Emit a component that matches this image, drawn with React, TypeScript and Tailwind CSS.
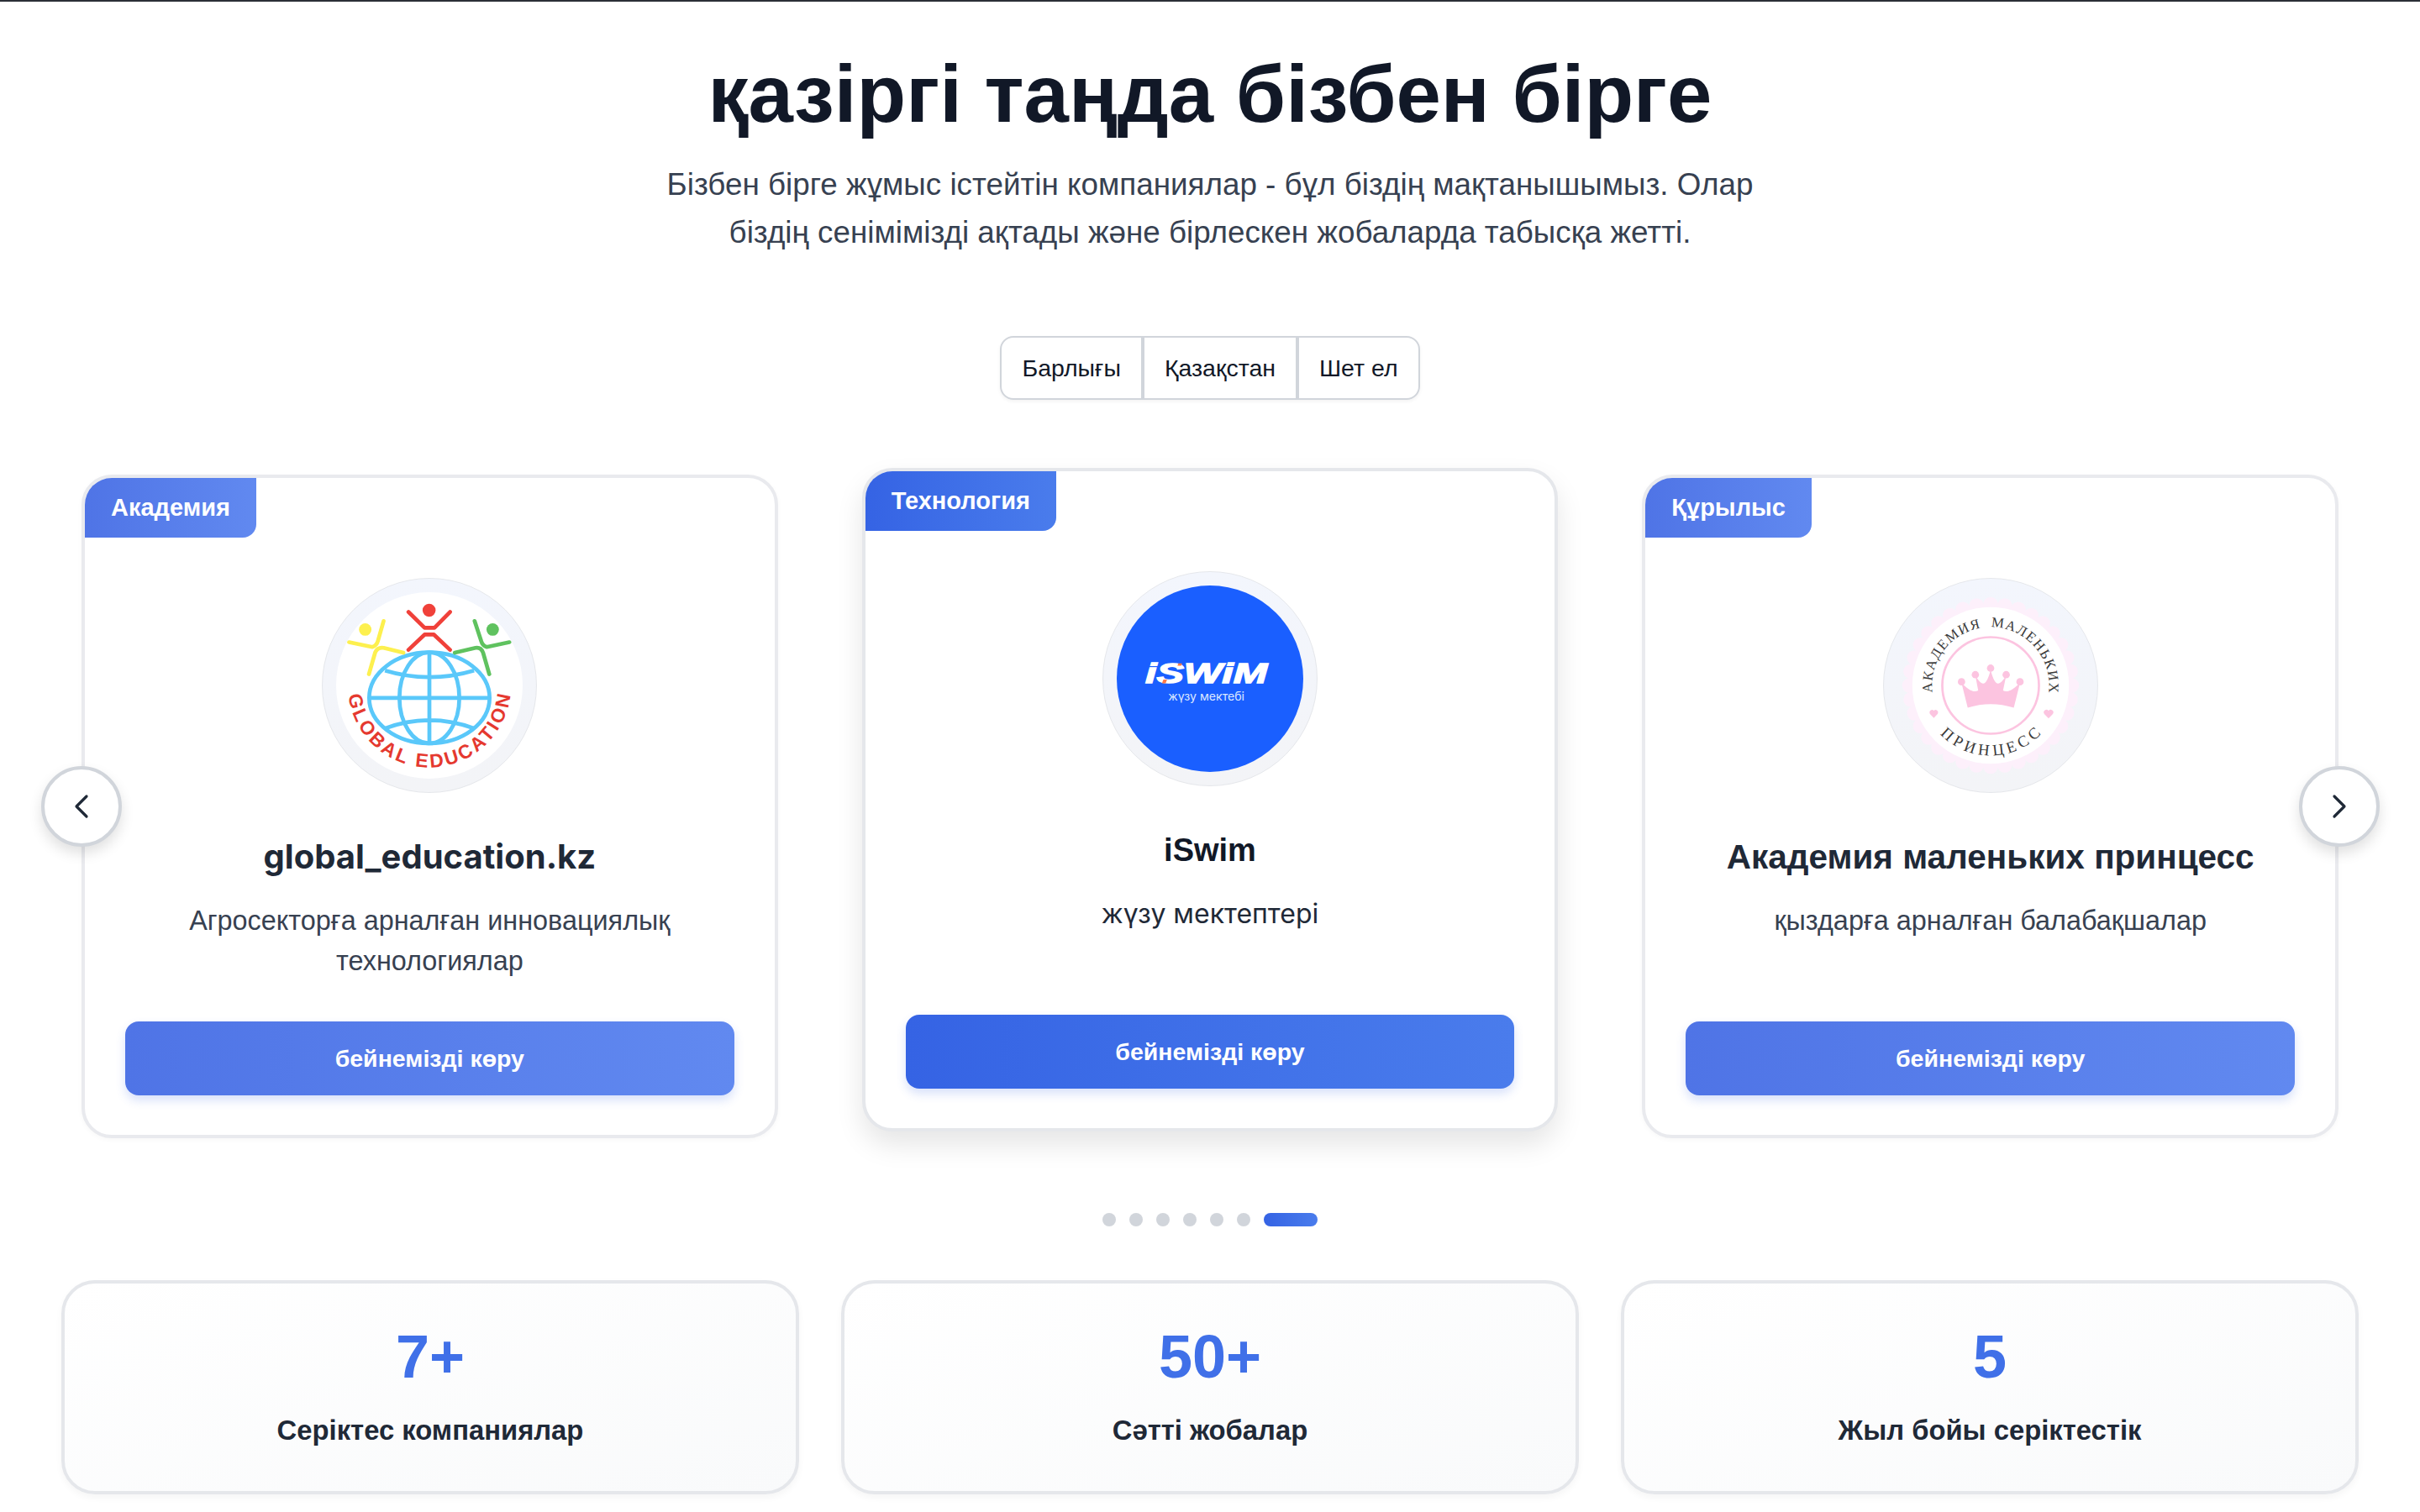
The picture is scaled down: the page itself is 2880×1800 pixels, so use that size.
import { ChevronLeft, ChevronRight } from "lucide-react";

const sans = "font-['Liberation_Sans',Arial,sans-serif]";

function GlobalLogo() {
  return (
    <svg viewBox="182 138 660 660" className="h-full w-full">
      <circle cx="512" cy="468" r="330" fill="#ffffff" />
      <g fill="none" stroke="#5ac8fa" strokeWidth="14">
        <ellipse cx="512" cy="512" rx="213" ry="161" />
        <ellipse cx="512" cy="512" rx="106" ry="161" />
        <path d="M512 351V673M300 512H725M355 415Q512 462 670 415M355 620Q512 562 670 620" />
      </g>
      <g fill="none" strokeWidth="14" strokeLinecap="round" strokeLinejoin="round">
        <path stroke="#f0413a" d="M438 208L495 264H530L585 208M438 342L495 288H528L585 342" />
        <path stroke="#fdf04e" d="M228 315L310 332Q325 328 330 310L350 240M298 428L320 352Q328 332 350 335L420 352" />
        <path stroke="#5fc25f" d="M672 240L695 310Q700 328 715 332L795 315M602 352L675 335Q695 332 702 352L724 428" />
      </g>
      <circle cx="511" cy="202" r="23" fill="#f0413a" />
      <circle cx="285" cy="270" r="22" fill="#fdf04e" />
      <circle cx="736" cy="270" r="22" fill="#5fc25f" />
      <defs>
        <path id="global-arc" d="M224 470A288 288 0 0 0 800 470" />
      </defs>
      <text fill="#e5392f" fontFamily="Liberation Sans, sans-serif" fontWeight="700" fontSize="68">
        <textPath href="#global-arc" startOffset="50%" textAnchor="middle" textLength="840">
          GLOBAL EDUCATION
        </textPath>
      </text>
    </svg>
  );
}

function IswimLogo() {
  return (
    <svg viewBox="150 114 660 660" className="h-full w-full">
      <circle cx="480" cy="444" r="330" fill="#1a5fff" />
      <text
        x="467"
        y="460"
        textAnchor="middle"
        fill="#ffffff"
        stroke="#ffffff"
        strokeWidth="4"
        fontFamily="Liberation Sans, sans-serif"
        fontWeight="700"
        fontStyle="italic"
        fontSize="100"
        textLength="432"
        lengthAdjust="spacingAndGlyphs"
      >
        iSWiM
      </text>
      <path d="M310 460l5-13h13l-5 13zM365 398l3-8h13l-3 8z" fill="#ff7a45" />
      <text x="467" y="520" textAnchor="middle" fill="#dce8ff" fontFamily="Inter, sans-serif" fontSize="42">
        жүзу мектебі
      </text>
    </svg>
  );
}

function PrincessLogo() {
  const scallops = Array.from({ length: 36 }, (_, i) => {
    const a = (i * Math.PI * 2) / 36;
    return { x: 476 + 287 * Math.cos(a), y: 437 + 287 * Math.sin(a) };
  });
  return (
    <svg viewBox="146 107 660 660" className="h-full w-full">
      {scallops.map((s, i) => (
        <circle key={i} cx={s.x} cy={s.y} r="26" fill="#fdf0fb" />
      ))}
      <circle cx="476" cy="437" r="290" fill="#fdf0fb" />
      <circle cx="476" cy="437" r="277" fill="#ffffff" />
      <circle cx="476" cy="437" r="171" fill="none" stroke="#fcc4e0" strokeWidth="8" />
      <path
        d="M395 516L373 428C395 450 415 465 432 455L422 402C445 440 460 445 476 382C492 445 507 440 531 402L520 455C537 465 557 450 580 428L558 516Q476 490 395 516Z"
        fill="#fcc4e0"
      />
      <g fill="#fcc4e0">
        <circle cx="373" cy="424" r="13" />
        <circle cx="422" cy="399" r="13" />
        <circle cx="476" cy="376" r="13" />
        <circle cx="531" cy="399" r="13" />
        <circle cx="580" cy="424" r="13" />
        <path d="M275 552l-14-15a9 9 0 0 1 14-11a9 9 0 0 1 14 11zM681 554l-15-16a9 9 0 0 1 15-11a9 9 0 0 1 15 11z" />
      </g>
      <defs>
        <path id="princess-top" d="M288 524A207 207 0 1 1 664 524" />
        <path id="princess-bottom" d="M228 437A248 248 0 0 0 724 437" />
      </defs>
      <text fill="#3a3a3a" fontFamily="Liberation Serif, serif" fontSize="50">
        <textPath href="#princess-top" startOffset="50%" textAnchor="middle" textLength="700">
          АКАДЕМИЯ{"\u00A0\u00A0"}МАЛЕНЬКИХ
        </textPath>
      </text>
      <text fill="#3a3a3a" fontFamily="Liberation Serif, serif" fontSize="56">
        <textPath href="#princess-bottom" startOffset="50%" textAnchor="middle" textLength="400">
          ПРИНЦЕСС
        </textPath>
      </text>
    </svg>
  );
}

function PartnerCard({
  tag,
  title,
  titleClass,
  desc,
  active,
  logo,
}: {
  tag: string;
  title: string;
  titleClass: string;
  desc: string[];
  active?: boolean;
  logo: React.ReactNode;
}) {
  return (
    <div
      className={`flex h-[790px] flex-col overflow-hidden rounded-[36px] border-4 bg-white ${
        active
          ? "-translate-y-2 border-[#e5e7eb] shadow-[0_16px_32px_rgba(0,0,0,0.1)]"
          : "border-[#e9eaee] shadow-[0_2px_6px_rgba(0,0,0,0.03)]"
      }`}
    >
      <div
        className={`w-fit rounded-br-[16px] px-[31px] py-[14px] text-[29px] leading-[43px] font-bold text-white ${
          active
            ? "bg-gradient-to-r from-[#3563e4] to-[#4a7cec]"
            : "bg-gradient-to-r from-[#4f74e6] to-[#6189f0]"
        }`}
      >
        {tag}
      </div>
      <div className="mt-12 h-[256px] w-[256px] self-center rounded-full border border-[#e5e7eb] bg-gradient-to-b from-[#f3f6fd] to-[#f3f4f7] p-[16px]">
        {logo}
      </div>
      <h3 className={`mt-[46px] text-center leading-[60px] ${titleClass} ${active ? "text-[#111827]" : "text-[#1f2937]"}`}>
        {title}
      </h3>
      <div
        className={`mt-[22px] h-[96px] text-center leading-[48px] ${
          active ? "font-['Inter',sans-serif] text-[32px] text-[#1f2937]" : "text-[32.4px] text-[#374151]"
        }`}
      >
        {desc.map((line) => (
          <p key={line}>{line}</p>
        ))}
      </div>
      <button
        className={`mx-[48px] mt-[48px] h-[88px] shrink-0 rounded-[16px] text-[28.5px] font-bold text-white shadow-[0_6px_12px_rgba(59,103,230,0.2)] ${
          active
            ? "bg-gradient-to-r from-[#3563e4] to-[#4a7cec]"
            : "bg-gradient-to-r from-[#4f74e6] to-[#6189f0]"
        }`}
      >
        бейнемізді көру
      </button>
    </div>
  );
}

function Stat({ value, label }: { value: string; label: string }) {
  return (
    <div className="flex h-[255px] flex-col items-center rounded-[40px] border-4 border-[#e5e7eb] bg-gradient-to-br from-white to-[#f9fafb] pt-[43px] shadow-[0_4px_8px_rgba(0,0,0,0.04)]">
      <div className="text-[72px] leading-[88px] font-bold text-[#4070e8]">{value}</div>
      <div className="mt-[20px] text-[32.8px] leading-[48px] font-bold text-[#1f2937]">{label}</div>
    </div>
  );
}

export default function App() {
  return (
    <div className={`${sans} min-h-[1800px] border-t-2 border-[#2b2f36] bg-white`}>
      <h1 className="mt-[54px] text-center text-[96px] leading-[112px] font-bold text-[#111827]">
        қазіргі таңда бізбен бірге
      </h1>
      <div className="mt-[23px] text-center text-[36.8px] leading-[57px] text-[#374151]">
        <p>Бізбен бірге жұмыс істейтін компаниялар - бұл біздің мақтанышымыз. Олар</p>
        <p>біздің сенімімізді ақтады және бірлескен жобаларда табысқа жетті.</p>
      </div>

      <div className="mt-[95px] flex justify-center">
        <div className="flex h-[76px] overflow-hidden rounded-[16px] border-2 border-[#d1d5db] text-[28.5px] text-[#111827] shadow-[0_2px_4px_rgba(0,0,0,0.05)]">
          <button className="px-[24px]">Барлығы</button>
          <button className="border-x-4 border-[#d1d5db] px-[24px]">Қазақстан</button>
          <button className="px-[24px]">Шет ел</button>
        </div>
      </div>

      <div className="relative mt-[89px] grid grid-cols-3 gap-[100px] px-[97px]">
        <PartnerCard
          tag="Академия"
          title="global_education.kz"
          titleClass="font-['Inter',sans-serif] text-[40px] font-bold"
          desc={["Агросекторға арналған инновациялық", "технологиялар"]}
          logo={<GlobalLogo />}
        />
        <PartnerCard
          tag="Технология"
          title="iSwim"
          titleClass="text-[38px] font-bold"
          active
          desc={["жүзу мектептері"]}
          logo={<IswimLogo />}
        />
        <PartnerCard
          tag="Құрылыс"
          title="Академия маленьких принцесс"
          titleClass="text-[40.5px] font-bold"
          desc={["қыздарға арналған балабақшалар"]}
          logo={<PrincessLogo />}
        />
        <button className="absolute top-[347px] left-[49px] flex h-[96px] w-[96px] items-center justify-center rounded-full border-4 border-[#d1d5db] bg-white text-[#1f2937] shadow-[0_8px_16px_rgba(0,0,0,0.12)]">
          <ChevronLeft size={48} strokeWidth={1.6} />
        </button>
        <button className="absolute top-[347px] right-[48px] flex h-[96px] w-[96px] items-center justify-center rounded-full border-4 border-[#d1d5db] bg-white text-[#1f2937] shadow-[0_8px_16px_rgba(0,0,0,0.12)]">
          <ChevronRight size={48} strokeWidth={1.6} />
        </button>
      </div>

      <div className="mt-[89px] flex items-center justify-center gap-4">
        <span className="h-4 w-4 rounded-full bg-[#d1d5db]" />
        <span className="h-4 w-4 rounded-full bg-[#d1d5db]" />
        <span className="h-4 w-4 rounded-full bg-[#d1d5db]" />
        <span className="h-4 w-4 rounded-full bg-[#d1d5db]" />
        <span className="h-4 w-4 rounded-full bg-[#d1d5db]" />
        <span className="h-4 w-4 rounded-full bg-[#d1d5db]" />
        <span className="h-4 w-16 rounded-full bg-gradient-to-r from-[#3563e4] to-[#4a7cec]" />
      </div>

      <div className="mt-[64px] grid grid-cols-3 gap-[50px] px-[73px]">
        <Stat value="7+" label="Серіктес компаниялар" />
        <Stat value="50+" label="Сәтті жобалар" />
        <Stat value="5" label="Жыл бойы серіктестік" />
      </div>
    </div>
  );
}
